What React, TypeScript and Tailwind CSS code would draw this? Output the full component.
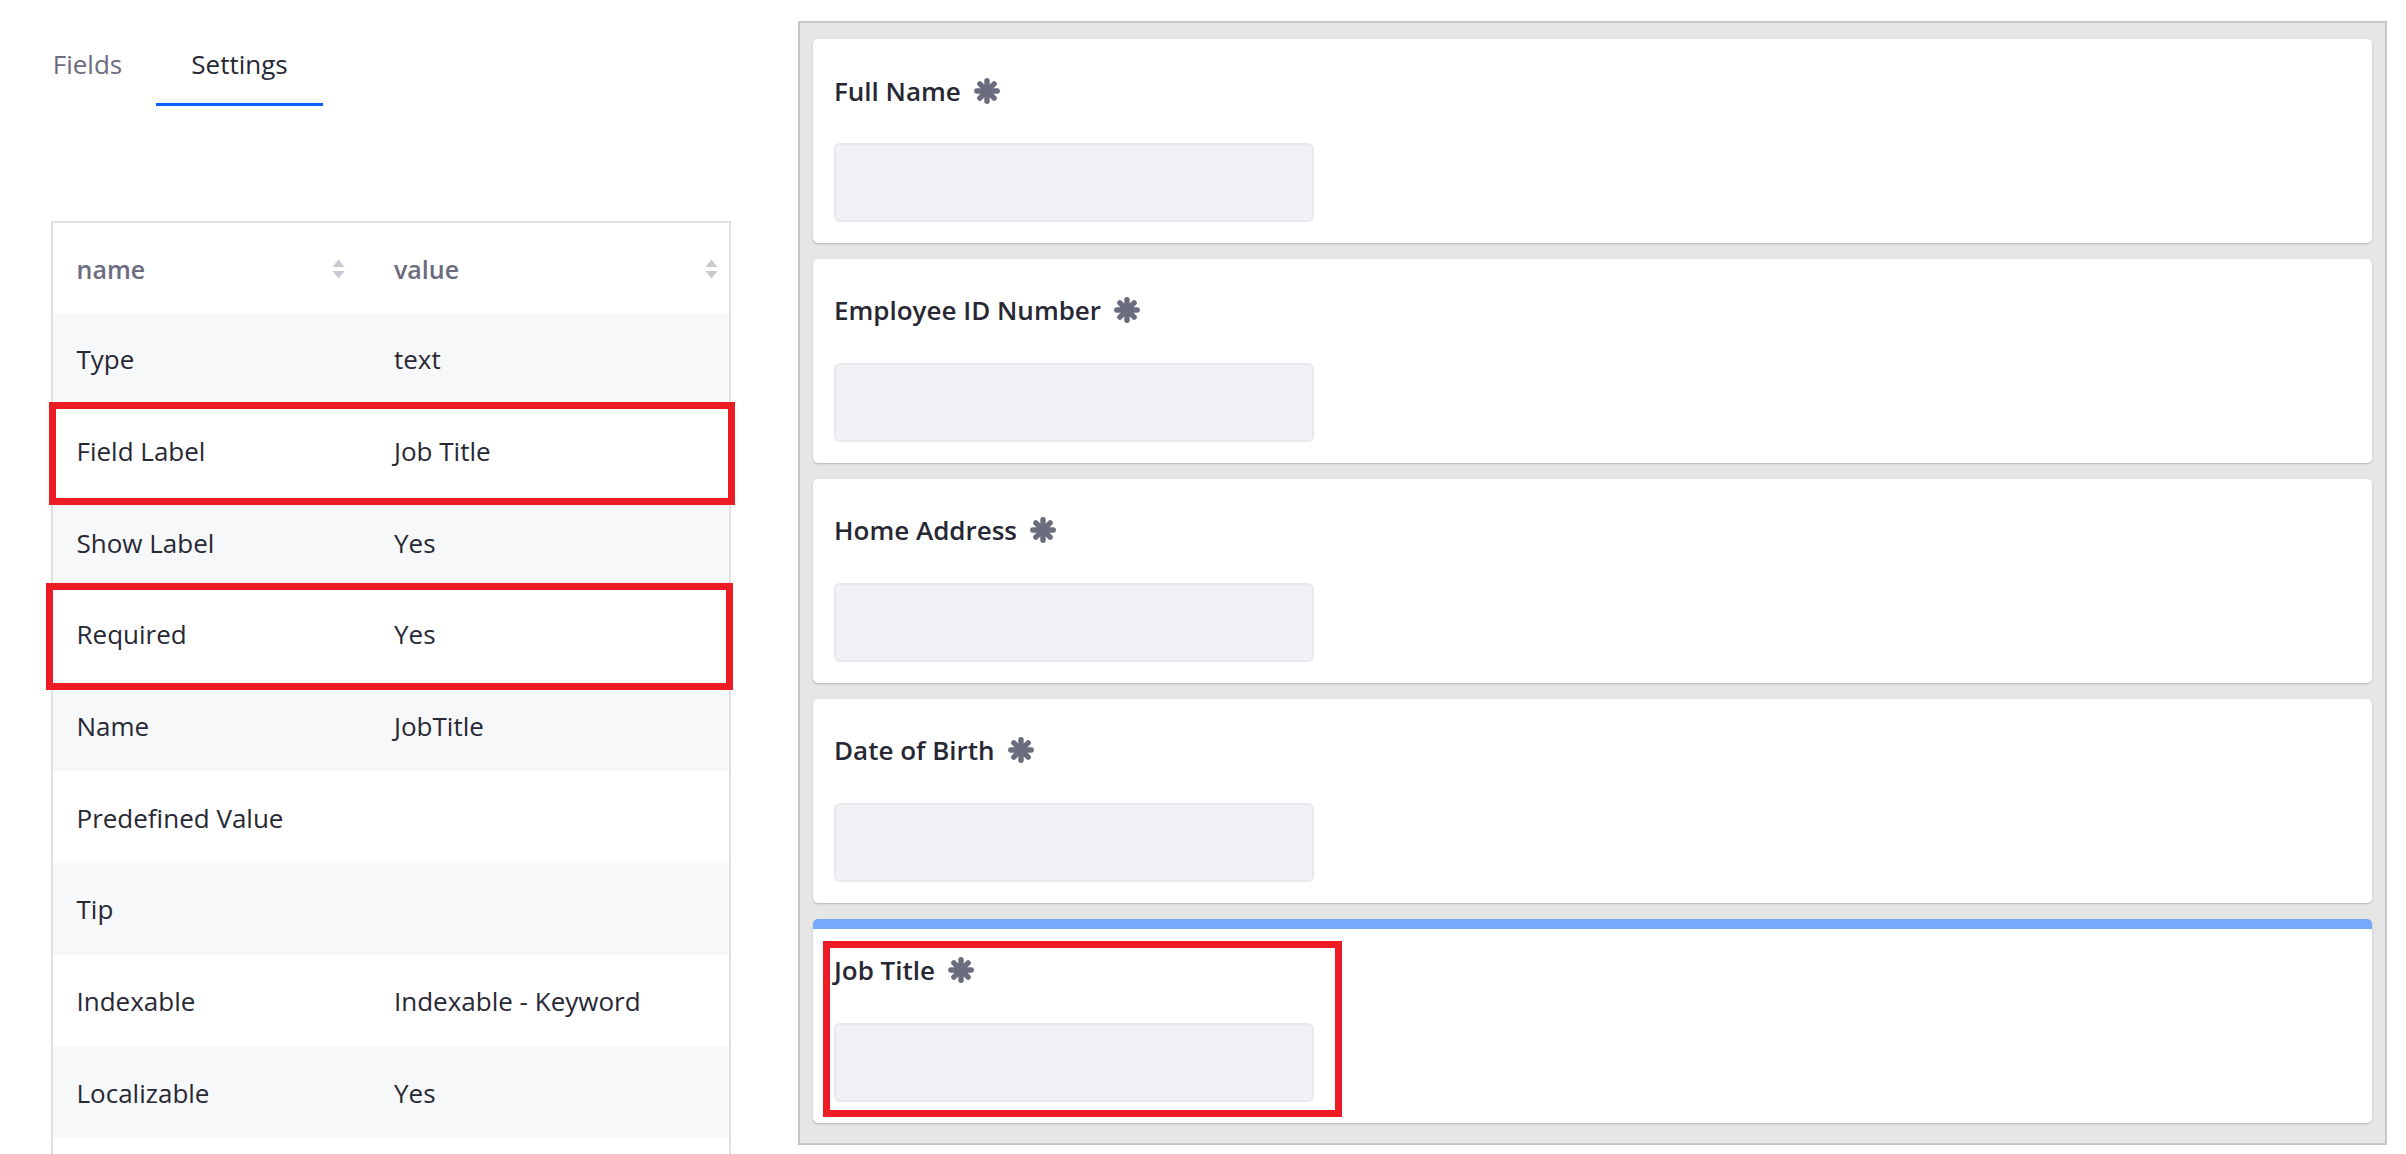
import React from "react";

const rows: { name: string; value: string }[] = [
  { name: "Type", value: "text" },
  { name: "Field Label", value: "Job Title" },
  { name: "Show Label", value: "Yes" },
  { name: "Required", value: "Yes" },
  { name: "Name", value: "JobTitle" },
  { name: "Predefined Value", value: "" },
  { name: "Tip", value: "" },
  { name: "Indexable", value: "Indexable - Keyword" },
  { name: "Localizable", value: "Yes" },
  { name: "", value: "" },
];

const fields = ["Full Name", "Employee ID Number", "Home Address", "Date of Birth"];

function SortIcon() {
  return (
    <svg width="15" height="22" viewBox="0 0 15 22" className="shrink-0">
      <path d="M7.5 1.5 L13.5 9 L1.5 9 Z" fill="#c9cad1" strokeLinejoin="round" />
      <path d="M1.5 13 L13.5 13 L7.5 20.5 Z" fill="#c9cad1" strokeLinejoin="round" />
    </svg>
  );
}

function Asterisk() {
  return (
    <svg width="26" height="26" viewBox="0 0 24 24" className="shrink-0">
      <g stroke="#6b6c7e" strokeWidth="5" strokeLinecap="round">
        <line x1="12" y1="2.6" x2="12" y2="21.4" />
        <line x1="2.6" y1="12" x2="21.4" y2="12" />
        <line x1="5.4" y1="5.4" x2="18.6" y2="18.6" />
        <line x1="18.6" y1="5.4" x2="5.4" y2="18.6" />
      </g>
      <circle cx="12" cy="12" r="4.5" fill="#6b6c7e" />
    </svg>
  );
}

function FieldCard({ label, active }: { label: string; active?: boolean }) {
  return (
    <div
      className={
        active
          ? "relative bg-white rounded-[5px] shadow-[0_1px_2px_rgba(0,0,0,0.22)] border-t-[10px] border-[#76a9fa] pt-[23.5px] px-[21px] pb-[20.4px]"
          : "relative bg-white rounded-[5px] shadow-[0_1px_2px_rgba(0,0,0,0.22)] pt-[33.5px] px-[21px] pb-[20.4px]"
      }
    >
      <div className="flex items-center gap-[13px] h-[36px] leading-[36px] text-[26px] font-semibold text-[#272833]">
        <span>{label}</span>
        <Asterisk />
      </div>
      <div className="mt-[34.8px] w-[480px] h-[79px] rounded-[6px] bg-[#f1f2f5] border-2 border-[#e7e7ed]" />
      {active && (
        <div className="absolute left-[10px] top-[12px] w-[519px] h-[175.7px] border-[7.5px] border-[#ed1c24] pointer-events-none" />
      )}
    </div>
  );
}

export default function App() {
  return (
    <div className="flex w-[2406px] h-[1154px] overflow-hidden bg-white font-['Segoe_UI','Open_Sans',sans-serif] text-[#272833]">
      {/* Left column */}
      <div className="w-[798px] shrink-0 flex flex-col">
        <div className="flex pl-[19px] pt-[45.8px]">
          <div className="w-[137px] flex justify-center pb-[21.2px] border-b-[3px] border-transparent text-[26px] leading-[36px] text-[#6b6c7e]">
            Fields
          </div>
          <div className="w-[167px] flex justify-center pb-[21.2px] border-b-[3.5px] border-[#0b5fff] text-[26px] leading-[36px] text-[#272833]">
            Settings
          </div>
        </div>

        <div className="relative ml-[51px] mt-[115px] w-[680px] border-x-2 border-t-2 border-[#e1e1e4]">
          <div className="grid grid-cols-[317.5px_1fr] h-[90px] pt-[3px] bg-white text-[25px] font-semibold text-[#6b6c7e]">
            <div className="flex items-center justify-between pl-[23.5px] pr-[25px]">
              <span>name</span>
              <SortIcon />
            </div>
            <div className="flex items-center justify-between pl-[23.5px] pr-[10px]">
              <span>value</span>
              <SortIcon />
            </div>
          </div>
          {rows.map((r, i) => (
            <div
              key={i}
              className={
                i % 2 === 0
                  ? "grid grid-cols-[317.5px_1fr] h-[91.7px] pt-[2px] bg-[#f7f8f9] text-[26px]"
                  : "grid grid-cols-[317.5px_1fr] h-[91.7px] pt-[2px] bg-white text-[26px]"
              }
            >
              <div className="flex items-center pl-[23.5px]">{r.name}</div>
              <div className="flex items-center pl-[23.5px]">{r.value}</div>
            </div>
          ))}

          <div className="absolute left-[-4.5px] top-[178.7px] w-[686.2px] h-[103.3px] border-[7.5px] border-[#ed1c24] pointer-events-none" />
          <div className="absolute left-[-7px] top-[359.7px] w-[687px] h-[107.3px] border-[7.5px] border-[#ed1c24] pointer-events-none" />
        </div>
      </div>

      {/* Right panel */}
      <div className="mt-[21px] w-[1589px] h-[1124px] shrink-0 border-2 border-[#c6c6c6] bg-[#e6e6e6] px-[13px] pt-[16px] flex flex-col gap-[16.3px]">
        {fields.map((f) => (
          <FieldCard key={f} label={f} />
        ))}
        <FieldCard label="Job Title" active />
      </div>
    </div>
  );
}
